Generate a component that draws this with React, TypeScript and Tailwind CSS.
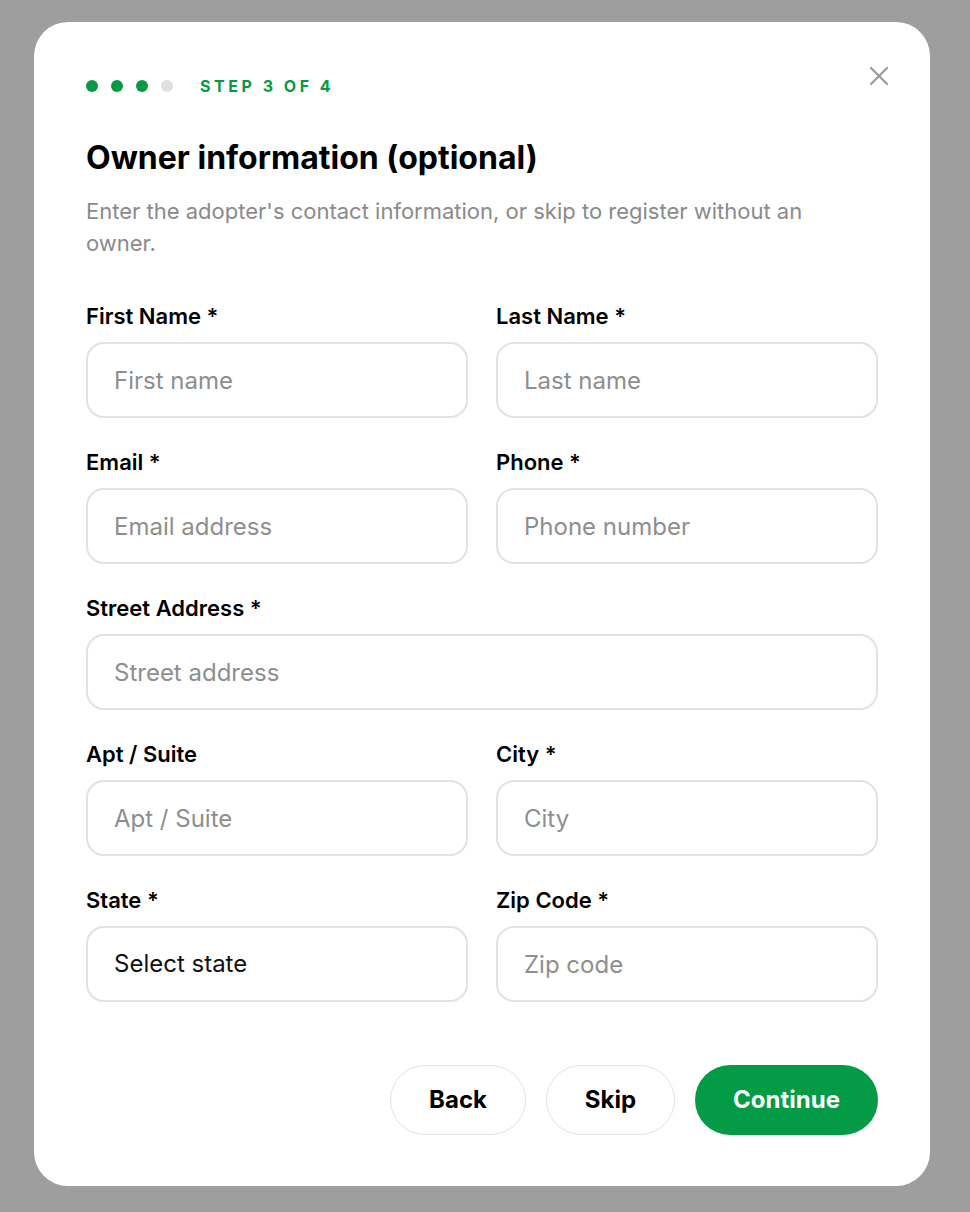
import { X } from "lucide-react";

const fields: { label: string; placeholder: string; span?: boolean; select?: boolean }[][] = [
  [
    { label: "First Name *", placeholder: "First name" },
    { label: "Last Name *", placeholder: "Last name" },
  ],
  [
    { label: "Email *", placeholder: "Email address" },
    { label: "Phone *", placeholder: "Phone number" },
  ],
  [{ label: "Street Address *", placeholder: "Street address", span: true }],
  [
    { label: "Apt / Suite", placeholder: "Apt / Suite" },
    { label: "City *", placeholder: "City" },
  ],
  [
    { label: "State *", placeholder: "Select state", select: true },
    { label: "Zip Code *", placeholder: "Zip code" },
  ],
];

function Field({ label, placeholder, span, select }: { label: string; placeholder: string; span?: boolean; select?: boolean }) {
  return (
    <div className={span ? "col-span-2 flex flex-col" : "flex flex-col"}>
      <label className="mb-[12px] text-[22px] leading-[28px] font-semibold text-black">{label}</label>
      {select ? (
        <div className="flex h-[76px] items-center rounded-[18px] border-2 border-[#e2e2e2] px-[26px] text-[24px] text-[#111]">
          {placeholder}
        </div>
      ) : (
        <input
          placeholder={placeholder}
          className="h-[76px] rounded-[18px] border-2 border-[#e2e2e2] px-[26px] text-[24px] text-[#111] outline-none placeholder:text-[#8e8e8e]"
        />
      )}
    </div>
  );
}

export default function App() {
  return (
    <div
      className="h-[1212px] overflow-hidden bg-[#9e9e9e] pt-[22px] pl-[34px]"
      style={{ fontFamily: "Inter, 'Noto Sans', sans-serif" }}
    >
      <div className="relative w-[896px] rounded-[34px] bg-white px-[52px] pt-[56px] pb-[51px]">
        <button className="absolute top-[38px] right-[35px] text-[#9a9a9a]">
          <X size={32} strokeWidth={1.6} />
        </button>

        {/* Step indicator */}
        <div className="flex h-4 items-center">
          <div className="flex items-center gap-[13px]">
            <span className="h-3 w-3 rounded-full bg-[#069a47]" />
            <span className="h-3 w-3 rounded-full bg-[#069a47]" />
            <span className="h-3 w-3 rounded-full bg-[#069a47]" />
            <span className="h-3 w-3 rounded-full bg-[#e0e0e0]" />
          </div>
          <span className="ml-[27px] text-[16px] font-bold tracking-[0.22em] text-[#069a47]">STEP 3 OF 4</span>
        </div>

        <h1 className="mt-[46px] text-[32px] leading-[36px] font-bold text-black">
          Owner information (optional)
        </h1>
        <p className="mt-[19px] text-[22px] leading-[32px] text-[#8a8a8a]">
          Enter the adopter's contact information, or skip to register without an owner.
        </p>

        <div className="mt-[43px] grid grid-cols-2 gap-x-[28px] gap-y-[30px]">
          {fields.flat().map((f) => (
            <Field key={f.label} {...f} />
          ))}
        </div>

        <div className="mt-[63px] flex justify-end gap-[20px]">
          <button className="h-[70px] w-[136px] rounded-full border border-[#e2e2e2] text-[24px] font-bold text-black">
            Back
          </button>
          <button className="h-[70px] w-[129px] rounded-full border border-[#e2e2e2] text-[24px] font-bold text-black">
            Skip
          </button>
          <button className="h-[70px] w-[183px] rounded-full bg-[#039b45] text-[24px] font-bold text-white">
            Continue
          </button>
        </div>
      </div>
    </div>
  );
}
